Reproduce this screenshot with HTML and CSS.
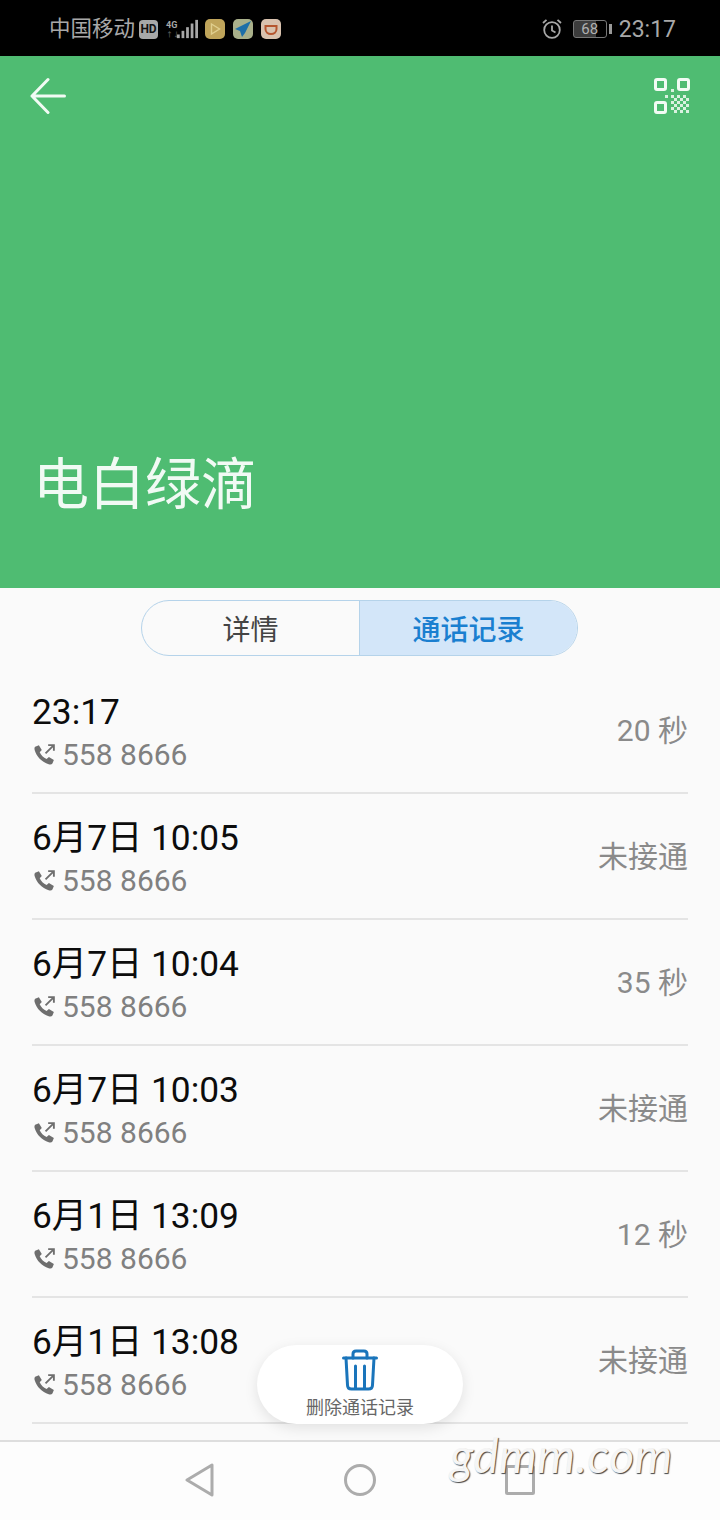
FILE: index.html
```html
<!DOCTYPE html>
<html lang="zh">
<head>
  <meta charset="UTF-8">
  <title>通话记录</title>
  <link rel="stylesheet" href="styles.css">
</head>
<body>

  <svg class="defs" width="0" height="0">
    <symbol id="call" viewBox="0 0 24 24">
      <path d="M3 4.5 L6.6 3 L9.4 7.6 L7.4 9.8 C8.6 12.6 11 15 14 16.4 L16.2 14.4 L21 17.2 L19.6 20.6 C19 21.6 17.6 21.8 16 21.3 C9.6 19.4 4.4 14.2 2.6 8 C2.2 6.4 2.3 5.2 3 4.5 Z" fill="currentColor"/>
      <path d="M13 11 L21 3 M15.5 3 H21 V8.5" fill="none" stroke="currentColor" stroke-width="1.8"/>
    </symbol>
  </svg>

  <div class="status">
    <div class="status-left">
      <span class="carrier">中国移动</span>
      <span class="hd">HD</span>
      <span class="net"><span>4G</span><span class="net-arrows">↑↓</span></span>
      <svg class="signal" width="21" height="22" viewBox="0 0 23 22">
        <rect x="0" y="17" width="3" height="4" />
        <rect x="5" y="13" width="3" height="8" />
        <rect x="10" y="9" width="3" height="12" />
        <rect x="15" y="5" width="3" height="16" />
        <rect x="20" y="1" width="3" height="20" />
      </svg>
      <svg class="app" width="20" height="20" viewBox="0 0 20 20">
        <rect width="20" height="20" rx="5" fill="#bfa45a"/>
        <path d="M6.5 5 L14.5 10 L6.5 15 Z" fill="none" stroke="#e0cf8e" stroke-width="1.4"/>
      </svg>
      <svg class="app" width="20" height="20" viewBox="0 0 20 20">
        <rect width="20" height="20" rx="5" fill="#a9b08a"/>
        <path d="M18 2 L2 10 L7 12 L9 18 L12 14 Z" fill="#1d6fa8"/>
      </svg>
      <svg class="app" width="20" height="20" viewBox="0 0 20 20">
        <rect width="20" height="20" rx="5" fill="#d9c2ae"/>
        <path d="M4.5 7 H15.5 V10 C15.5 13 13 15 10 15 C7 15 4.500 13 4.500 10 Z" fill="none" stroke="#b5562f" stroke-width="2"/>
      </svg>
    </div>
    <div class="status-right">
      <svg width="22" height="22" viewBox="0 0 22 22" fill="none" stroke="#a8a8a8" stroke-width="1.8">
        <circle cx="11" cy="12" r="7.800"/>
        <path d="M11 7.500 V12.500 L14.500 14.500"/>
        <path d="M2 5 L5.500 1.800 M20 5 L16.500 1.800"/>
      </svg>
      <span class="battery"><span class="battery-num">68</span></span>
      <span class="battery-tip"></span>
      <span class="clock">23:17</span>
    </div>
  </div>

  <div class="hero">
    <div class="hero-top">
      <svg class="back" width="36" height="38" viewBox="0 0 36 38" fill="none" stroke="#f2fbf4" stroke-width="3" stroke-linecap="round" stroke-linejoin="round">
        <path d="M34.500 19 H2 M18 2.500 L2 19 L18 35.500"/>
      </svg>
      <svg width="36" height="36" viewBox="0 0 36 36">
        <g fill="none" stroke="#f2fbf4" stroke-width="3">
          <rect x="1.500" y="1.500" width="10" height="10" rx="1.500"/>
          <rect x="24.500" y="1.500" width="10" height="10" rx="1.500"/>
          <rect x="1.500" y="24.500" width="10" height="10" rx="1.500"/>
        </g>
        <g fill="#f2fbf4" opacity="0.85">
          <rect x="17" y="11" width="3" height="3"/>
          <rect x="11" y="17" width="3" height="3"/><rect x="17" y="17" width="3" height="3"/><rect x="23" y="17" width="3" height="3"/><rect x="29" y="17" width="3" height="3"/>
          <rect x="20" y="20" width="3" height="3"/><rect x="26" y="20" width="3" height="3"/><rect x="32" y="20" width="3" height="3"/>
          <rect x="17" y="23" width="3" height="3"/><rect x="23" y="23" width="3" height="3"/><rect x="29" y="23" width="3" height="3"/>
          <rect x="20" y="26" width="3" height="3"/><rect x="26" y="26" width="3" height="3"/><rect x="32" y="26" width="3" height="3"/>
          <rect x="17" y="29" width="3" height="3"/><rect x="23" y="29" width="3" height="3"/><rect x="29" y="29" width="3" height="3"/>
          <rect x="20" y="32" width="3" height="3"/><rect x="26" y="32" width="3" height="3"/><rect x="32" y="32" width="3" height="3"/>
        </g>
      </svg>
    </div>
    <h1 class="name">电白绿滴</h1>
  </div>

  <div class="content">
    <div class="tabs">
      <div class="tab">详情</div>
      <div class="tab active">通话记录</div>
    </div>

    <ul class="calls">
      <li class="call">
        <div>
          <div class="call-time">23:17</div>
          <div class="call-num"><svg class="call-icon"><use href="#call"/></svg>558 8666</div>
        </div>
        <div class="call-len">20 秒</div>
      </li>
      <li class="call">
        <div>
          <div class="call-time">6月7日 10:05</div>
          <div class="call-num"><svg class="call-icon"><use href="#call"/></svg>558 8666</div>
        </div>
        <div class="call-len">未接通</div>
      </li>
      <li class="call">
        <div>
          <div class="call-time">6月7日 10:04</div>
          <div class="call-num"><svg class="call-icon"><use href="#call"/></svg>558 8666</div>
        </div>
        <div class="call-len">35 秒</div>
      </li>
      <li class="call">
        <div>
          <div class="call-time">6月7日 10:03</div>
          <div class="call-num"><svg class="call-icon"><use href="#call"/></svg>558 8666</div>
        </div>
        <div class="call-len">未接通</div>
      </li>
      <li class="call">
        <div>
          <div class="call-time">6月1日 13:09</div>
          <div class="call-num"><svg class="call-icon"><use href="#call"/></svg>558 8666</div>
        </div>
        <div class="call-len">12 秒</div>
      </li>
      <li class="call">
        <div>
          <div class="call-time">6月1日 13:08</div>
          <div class="call-num"><svg class="call-icon"><use href="#call"/></svg>558 8666</div>
        </div>
        <div class="call-len">未接通</div>
      </li>
    </ul>

    <div class="delete">
      <svg width="36" height="42" viewBox="0 0 36 42" fill="none" stroke="#1a75bb" stroke-width="3" stroke-linecap="round" stroke-linejoin="round">
        <path d="M1.500 9 H34.500"/>
        <path d="M11 9 V5 C11 3 12 2 14 2 H22 C24 2 25 3 25 5 V9"/>
        <path d="M4 9 L5.500 36 C5.500 38.500 7 40 9.500 40 H26.500 C29 40 30.500 38.500 30.500 36 L32 9"/>
        <path d="M13.500 17 V39 M22.500 17 V39"/>
      </svg>
      <span>删除通话记录</span>
    </div>
  </div>

  <div class="nav">
    <svg width="32" height="34" viewBox="0 0 32 34" fill="none" stroke="#acacac" stroke-width="3" stroke-linejoin="round">
      <path d="M29 2 V32 L4 17 Z"/>
    </svg>
    <svg width="34" height="34" viewBox="0 0 34 34" fill="none" stroke="#acacac" stroke-width="3">
      <circle cx="17" cy="17" r="14.500"/>
    </svg>
    <svg width="30" height="30" viewBox="0 0 30 30" fill="none" stroke="#acacac" stroke-width="3">
      <rect x="1.500" y="1.500" width="27" height="27" rx="1"/>
    </svg>
  </div>

  <div class="watermark">gdmm.com</div>

</body>
</html>
```

FILE: styles.css
```css
html, body {
  margin: 0;
  padding: 0;
}
body {
  width: 720px;
  height: 1520px;
  position: relative;
  overflow: hidden;
  background: #fafafa;
  font-family: Roboto, "Noto Sans CJK SC", sans-serif;
}
.defs {
  position: absolute;
}

/* status bar */
.status {
  height: 56px;
  background: #000;
  color: #a8a8a8;
  display: flex;
  justify-content: space-between;
  align-items: center;
  padding: 2px 44px 0 49px;
  box-sizing: border-box;
}
.status-left, .status-right {
  display: flex;
  align-items: center;
}
.carrier {
  font-size: 21.5px;
  line-height: 26px;
}
.hd {
  width: 19px;
  height: 19px;
  margin-left: 4px;
  border-radius: 4px;
  background: #a8a8a8;
  color: #111;
  font-size: 12px;
  font-weight: 700;
  line-height: 19px;
  text-align: center;
}
.net {
  display: flex;
  flex-direction: column;
  margin-left: 8px;
  font-size: 9px;
  font-weight: 700;
  line-height: 11px;
}
.net-arrows {
  color: #555;
  font-size: 7px;
  line-height: 8px;
}
.signal {
  fill: #a8a8a8;
  margin-left: -3px;
  margin-right: 7px;
}
.app {
  margin-right: 8px;
}
.app:last-child {
  margin-right: 0;
}
.battery {
  width: 34px;
  height: 18px;
  margin-left: 10px;
  border: 1px solid #777;
  border-radius: 3px;
  box-sizing: border-box;
  background: linear-gradient(90deg, #3c3c3c 68%, #000 68%);
  display: flex;
  align-items: center;
  justify-content: center;
}
.battery-num {
  font-size: 15px;
  color: #b0b0b0;
}
.battery-tip {
  width: 3px;
  height: 10px;
  margin-left: 2px;
  background: #999;
}
.clock {
  margin-left: 7px;
  font-size: 23px;
}

/* green header */
.hero {
  height: 532px;
  background: #4fbc72;
  padding: 22px 30px 0 30px;
  box-sizing: border-box;
  position: relative;
}
.hero-top {
  display: flex;
  justify-content: space-between;
  height: 36px;
}
.back {
  margin-top: -1px;
}
.name {
  margin: 335px 0 0 3px;
  font-size: 56px;
  font-weight: 400;
  line-height: 72px;
  color: #f1faf4;
}

/* tabs */
.content {
  position: relative;
  height: 852px;
  overflow: hidden;
}
.tabs {
  width: 437px;
  height: 56px;
  margin: 12px 0 0 141px;
  display: flex;
  border: 1px solid #b5d3ea;
  border-radius: 28px;
  box-sizing: border-box;
  overflow: hidden;
}
.tab {
  flex: 1;
  text-align: center;
  font-size: 28px;
  line-height: 60px;
  color: #444;
}
.tab.active {
  background: #d3e6f9;
  border-left: 1px solid #b5d3ea;
  color: #1a7fd0;
  font-weight: 500;
}

/* call list */
.calls {
  list-style: none;
  margin: 12px 32px 0;
  padding: 0;
}
.call {
  height: 126px;
  border-bottom: 2px solid #e4e4e4;
  box-sizing: border-box;
  display: flex;
  justify-content: space-between;
  align-items: center;
}
.call-time {
  margin-top: 6px;
  font-size: 35.3px;
  line-height: 44px;
  color: #0c0c0c;
}
.call-num {
  display: flex;
  align-items: center;
  font-size: 30px;
  line-height: 42px;
  color: #808080;
}
.call-icon {
  width: 25px;
  height: 25px;
  margin-right: 5px;
  margin-top: -2px;
  color: #6e6e6e;
}
.call-len {
  margin-bottom: 4px;
  font-size: 30px;
  color: #8a8a8a;
}

/* floating delete button */
.delete {
  position: absolute;
  left: 257px;
  top: 757px;
  width: 206px;
  height: 79px;
  padding-top: 4px;
  box-sizing: border-box;
  border-radius: 40px;
  background: #fff;
  box-shadow: 0 4px 14px rgba(0, 0, 0, 0.1);
  display: flex;
  flex-direction: column;
  align-items: center;
  font-size: 18px;
  color: #666;
}
.delete span {
  margin-top: 6px;
  line-height: 22px;
}

/* bottom nav */
.nav {
  height: 80px;
  border-top: 2px solid #dedede;
  background: #fdfdfd;
  box-sizing: border-box;
  display: flex;
  justify-content: center;
  align-items: center;
  gap: 128px;
  padding: 0 2px 2px 0;
}

.watermark {
  position: absolute;
  left: 450px;
  top: 1425px;
  font-family: Lato, sans-serif;
  font-style: italic;
  font-weight: 400;
  font-size: 48px;
  line-height: 60px;
  letter-spacing: 0.5px;
  color: #f5f5f5;
  text-shadow: 1px 1px 1px #444;
}
```
